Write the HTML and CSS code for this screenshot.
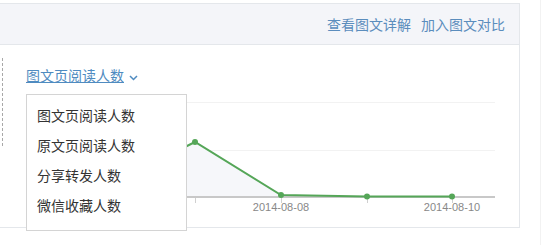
FILE: index.html
```html
<!DOCTYPE html>
<html>
  <head>
    <title>图文分析</title>
    <link rel="stylesheet" href="styles.css">
  </head>
  <body>
    <div class="page">
      <div class="panel">
        <div class="panel-head">
          <a class="head-link" href="#">查看图文详解</a>
          <a class="head-link" href="#">加入图文对比</a>
        </div>
        <div class="panel-body">
          <div class="side-line"></div>
          <div class="main">
            <div class="picker">
              <a class="picker-link" href="#">图文页阅读人数</a>
              <svg class="caret" width="9" height="6" viewBox="0 0 9 6">
                <path d="M1 1 L4.5 4.5 L8 1" fill="none" stroke="#4f8bc0" stroke-width="1.5"/>
              </svg>
            </div>
            <svg class="chart" width="474" height="130" viewBox="0 0 474 130">
              <line x1="4" y1="12.5" x2="469" y2="12.5" stroke="#f2f2f2"/>
              <line x1="4" y1="60.5" x2="469" y2="60.5" stroke="#f2f2f2"/>
              <polygon points="0,107 83,95 169,52 255,105 341,106.5 426,106.5 426,107" fill="#f6f7fa"/>
              <line x1="0" y1="107" x2="469" y2="107" stroke="#c8c8c8" stroke-width="2"/>
              <g stroke="#d0d0d0">
                <line x1="83.5" y1="108" x2="83.5" y2="113"/>
                <line x1="169.5" y1="108" x2="169.5" y2="113"/>
                <line x1="255.5" y1="108" x2="255.5" y2="113"/>
                <line x1="341.5" y1="108" x2="341.5" y2="113"/>
                <line x1="426.5" y1="108" x2="426.5" y2="113"/>
              </g>
              <polyline points="0,107 83,95 169,52 255,105 341,106.5 426,106.5" fill="none" stroke="#55a658" stroke-width="2"/>
              <g fill="#55a658">
                <circle cx="169" cy="52" r="3"/>
                <circle cx="255" cy="105" r="3"/>
                <circle cx="341" cy="106.5" r="3"/>
                <circle cx="426" cy="106.5" r="3"/>
              </g>
              <text x="255" y="121" class="axis-label">2014-08-08</text>
              <text x="426" y="121" class="axis-label">2014-08-10</text>
            </svg>
          </div>

          <!-- metric menu -->
          <ul class="menu">
            <li>图文页阅读人数</li>
            <li>原文页阅读人数</li>
            <li>分享转发人数</li>
            <li>微信收藏人数</li>
          </ul>
        </div>
      </div>
      <div class="aside"></div>
    </div>
  </body>
</html>
```

FILE: styles.css
```css
body {
  margin: 0;
  background: #fff;
  font-family: "Noto Sans CJK SC", "Liberation Sans", sans-serif;
  font-size: 14px;
  color: #333;
}

.page {
  display: flex;
  height: 245px;
}

/* Panel */
.panel {
  width: 519px;
  margin-top: 3px;
  align-self: flex-start;
  border: 1px solid #e4e7eb;
  border-left: none;
}

.panel-head {
  height: 40px;
  background-color: #f4f5f9;
  border-bottom: 1px solid #e4e7eb;
  display: flex;
  justify-content: flex-end;
  align-items: center;
  gap: 10px;
  padding-right: 14px;
}

.head-link {
  color: #5b8dbd;
  text-decoration: none;
  line-height: 20px;
}

.panel-body {
  position: relative;
  height: 182px;
  display: flex;
}

.side-line {
  margin-left: 2px;
  margin-top: 13px;
  height: 88px;
  border-left: 1px dashed #a8a8a8;
}

.main {
  margin-left: 23px;
  padding-top: 20px;
}

.picker {
  display: flex;
  align-items: center;
  height: 20px;
}

.picker-link {
  color: #4f8bc0;
  text-decoration: underline;
  line-height: 20px;
}

.caret {
  margin-left: 5px;
  margin-top: 5px;
}

.chart {
  display: block;
  margin-top: 5px;
}

.axis-label {
  font-family: "Liberation Sans", sans-serif;
  font-size: 11px;
  fill: #888;
  text-anchor: middle;
}

/* Dropdown menu */
.menu {
  position: absolute;
  top: 49px;
  left: 26px;
  width: 159px;
  margin: 0;
  padding: 5px 0 10px;
  list-style: none;
  background: #fff;
  border: 1px solid #d4d4d4;
}

.menu li {
  padding-left: 10px;
  line-height: 30px;
  color: #333;
}

.aside {
  margin-left: 20px;
  border-left: 1px solid #f2f2f2;
}
```
